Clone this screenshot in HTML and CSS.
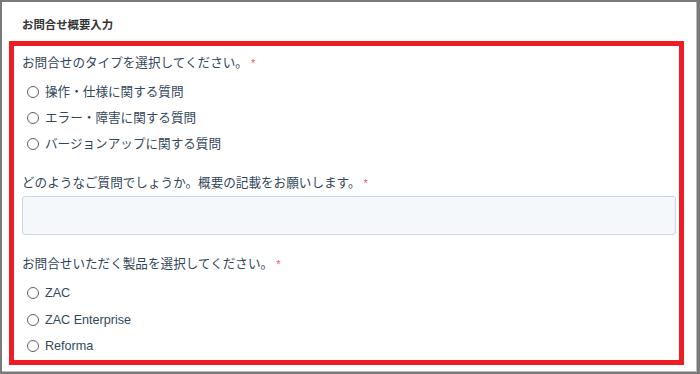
FILE: index.html
```html
<!DOCTYPE html>
<html lang="ja">
<head>
<meta charset="UTF-8">
<meta name="viewport" content="width=device-width, initial-scale=1.0">
<title>お問合せ概要入力</title>
<link rel="stylesheet" href="styles.css">
</head>
<body>

<div class="frame">
  <h2 class="section-title">お問合せ概要入力</h2>

  <div class="highlight">
    <div class="field">
      <label class="field-label">お問合せのタイプを選択してください。<span class="req">*</span></label>
      <ul class="options">
        <li><label class="option"><input type="radio" name="type"> 操作・仕様に関する質問</label></li>
        <li><label class="option"><input type="radio" name="type"> エラー・障害に関する質問</label></li>
        <li><label class="option"><input type="radio" name="type"> バージョンアップに関する質問</label></li>
      </ul>
    </div>

    <div class="field">
      <label class="field-label">どのようなご質問でしょうか。概要の記載をお願いします。<span class="req">*</span></label>
      <input type="text" class="text-input">
    </div>

    <div class="field">
      <label class="field-label">お問合せいただく製品を選択してください。<span class="req">*</span></label>
      <ul class="options products">
        <li><label class="option"><input type="radio" name="product"> ZAC</label></li>
        <li><label class="option"><input type="radio" name="product"> ZAC Enterprise</label></li>
        <li><label class="option"><input type="radio" name="product"> Reforma</label></li>
      </ul>
    </div>
  </div>
</div>

</body>
</html>
```

FILE: styles.css
```css
/* General Styles */
body {
  margin: 0;
  padding: 0;
  background-color: #fff;
  font-family: "Liberation Sans", "Noto Sans CJK JP", sans-serif;
  color: #33475b;
}

.frame {
  box-sizing: border-box;
  width: 700px;
  height: 374px;
  margin: 0;
  padding: 15px 13px 0 7px;
  border-top: 2px solid #7a7a7a;
  border-left: 2px solid #7a7a7a;
  border-right: 3px solid #7a7a7a;
  border-bottom: 2px solid #7a7a7a;
  box-shadow: inset -1px -1px 0 #bbb;
}

.section-title {
  margin: 0 0 8px 13px;
  font-size: 11.4px;
  line-height: 16px;
  font-weight: bold;
  color: #333;
}

.highlight {
  border: 5px solid #ee1c25;
  padding: 8px 3px 0 8px;
}

.field-label {
  display: block;
  font-size: 12.6px;
  line-height: 18px;
  color: #33475b;
}

.req {
  color: #f2545b;
  margin-left: 3px;
  font-size: 11px;
  vertical-align: top;
}

.options {
  list-style: none;
  margin: 7px 0 17px;
  padding: 0;
}

.options li {
  height: 26px;
  display: flex;
  align-items: center;
}

.products {
  margin: 7px 0 0;
}

.products li {
  height: 26.5px;
}

.option {
  display: flex;
  align-items: center;
  gap: 6px;
  font-size: 12.6px;
  line-height: 18px;
  color: #33475b;
  padding-left: 5px;
}

.option input {
  appearance: none;
  -webkit-appearance: none;
  box-sizing: border-box;
  width: 12px;
  height: 12px;
  margin: 0;
  border: 1px solid #606060;
  border-radius: 50%;
  background-color: #fff;
}

.text-input {
  display: block;
  box-sizing: border-box;
  width: 100%;
  height: 39px;
  margin: 4px 0 20px;
  background-color: #f5f8fa;
  border: 1px solid #cbd6e2;
  border-radius: 3px;
}
```
